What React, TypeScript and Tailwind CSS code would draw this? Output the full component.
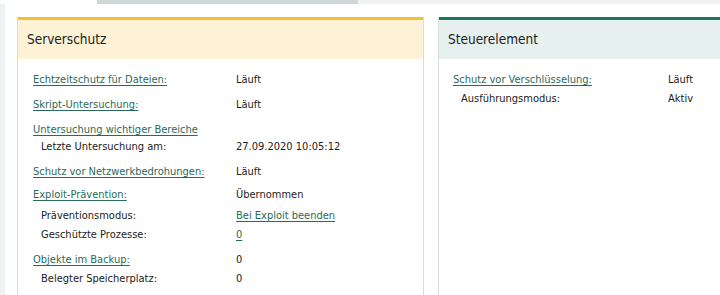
import React from "react";

type Row = { label: string; value: string; link?: boolean; sub?: boolean; valueLink?: boolean; mt: number };

const leftRows: Row[] = [
  { label: "Echtzeitschutz für Dateien:", value: "Läuft", link: true, mt: 0 },
  { label: "Skript-Untersuchung:", value: "Läuft", link: true, mt: 8 },
  { label: "Untersuchung wichtiger Bereiche", value: "", link: true, mt: 8 },
  { label: "Letzte Untersuchung am:", value: "27.09.2020 10:05:12", sub: true, mt: 0 },
  { label: "Schutz vor Netzwerkbedrohungen:", value: "Läuft", link: true, mt: 8 },
  { label: "Exploit-Prävention:", value: "Übernommen", link: true, mt: 6 },
  { label: "Präventionsmodus:", value: "Bei Exploit beenden", sub: true, valueLink: true, mt: 4 },
  { label: "Geschützte Prozesse:", value: "0", sub: true, valueLink: true, mt: 2 },
  { label: "Objekte im Backup:", value: "0", link: true, mt: 8 },
  { label: "Belegter Speicherplatz:", value: "0", sub: true, mt: 2 },
];

const rightRows: Row[] = [
  { label: "Schutz vor Verschlüsselung:", value: "Läuft", link: true, mt: 0 },
  { label: "Ausführungsmodus:", value: "Aktiv", sub: true, mt: 2 },
];

const mtClass: Record<number, string> = {
  0: "mt-0",
  2: "mt-[2px]",
  4: "mt-[4px]",
  6: "mt-[6px]",
  8: "mt-[8px]",
};

function Rows({ rows, valueCol }: { rows: Row[]; valueCol: string }) {
  return (
    <div className="flex flex-col">
      {rows.map((r, i) => (
        <div key={i} className={`flex h-[17px] items-center leading-[17px] ${mtClass[r.mt]}`}>
          <div className={`${valueCol} shrink-0 ${r.sub ? "pl-[8px]" : ""}`}>
            {r.link ? (
              <span className="text-[#2b6a58] underline decoration-[#2b6a58] underline-offset-[2px]">{r.label}</span>
            ) : (
              <span className="text-[#222]">{r.label}</span>
            )}
          </div>
          <div>
            {r.valueLink ? (
              <span className="text-[#2b6a58] underline underline-offset-[2px]">{r.value}</span>
            ) : (
              <span className="text-[#222]">{r.value}</span>
            )}
          </div>
        </div>
      ))}
    </div>
  );
}

export default function App() {
  return (
    <div
      className="relative h-[295px] w-[720px] overflow-hidden bg-white text-[11px]"
      style={{ fontFamily: "'DejaVu Sans Condensed', 'DejaVu Sans', sans-serif", fontStretch: "condensed" }}
    >
      {/* top strips */}
      <div className="flex h-[4px] w-full">
        <div className="w-[97px] bg-white" />
        <div className="w-[261px] bg-[#cfd8d8]" />
        <div className="flex-1 bg-[#f1f2f2]" />
      </div>
      <div className="flex h-[291px]">
        <div className="w-[5px] shrink-0 bg-[#eef2f5]" />
        <div className="flex flex-1 gap-[14px] pl-[12px] pt-[13px]">
          {/* Left panel */}
          <div className="flex w-[407px] shrink-0 flex-col border-x border-[#dcdcdc]">
            <div className="h-[3px] bg-[#f2c12e]" />
            <div className="flex h-[39px] items-center bg-[#fdf2d6] pl-[9px] text-[13.5px] text-[#222]">
              Serverschutz
            </div>
            <div className="flex-1 bg-white pl-[15px] pt-[12px]">
              <Rows rows={leftRows} valueCol="w-[203px]" />
            </div>
          </div>
          {/* Right panel */}
          <div className="flex flex-1 flex-col border-l border-[#dcdcdc]">
            <div className="h-[3px] bg-[#1b7a5c]" />
            <div className="flex h-[39px] items-center bg-[#e6f0ee] pl-[9px] text-[13.5px] text-[#222]">
              Steuerelement
            </div>
            <div className="flex-1 bg-white pl-[14px] pt-[12px]">
              <Rows rows={rightRows} valueCol="w-[215px]" />
            </div>
          </div>
        </div>
      </div>
    </div>
  );
}
